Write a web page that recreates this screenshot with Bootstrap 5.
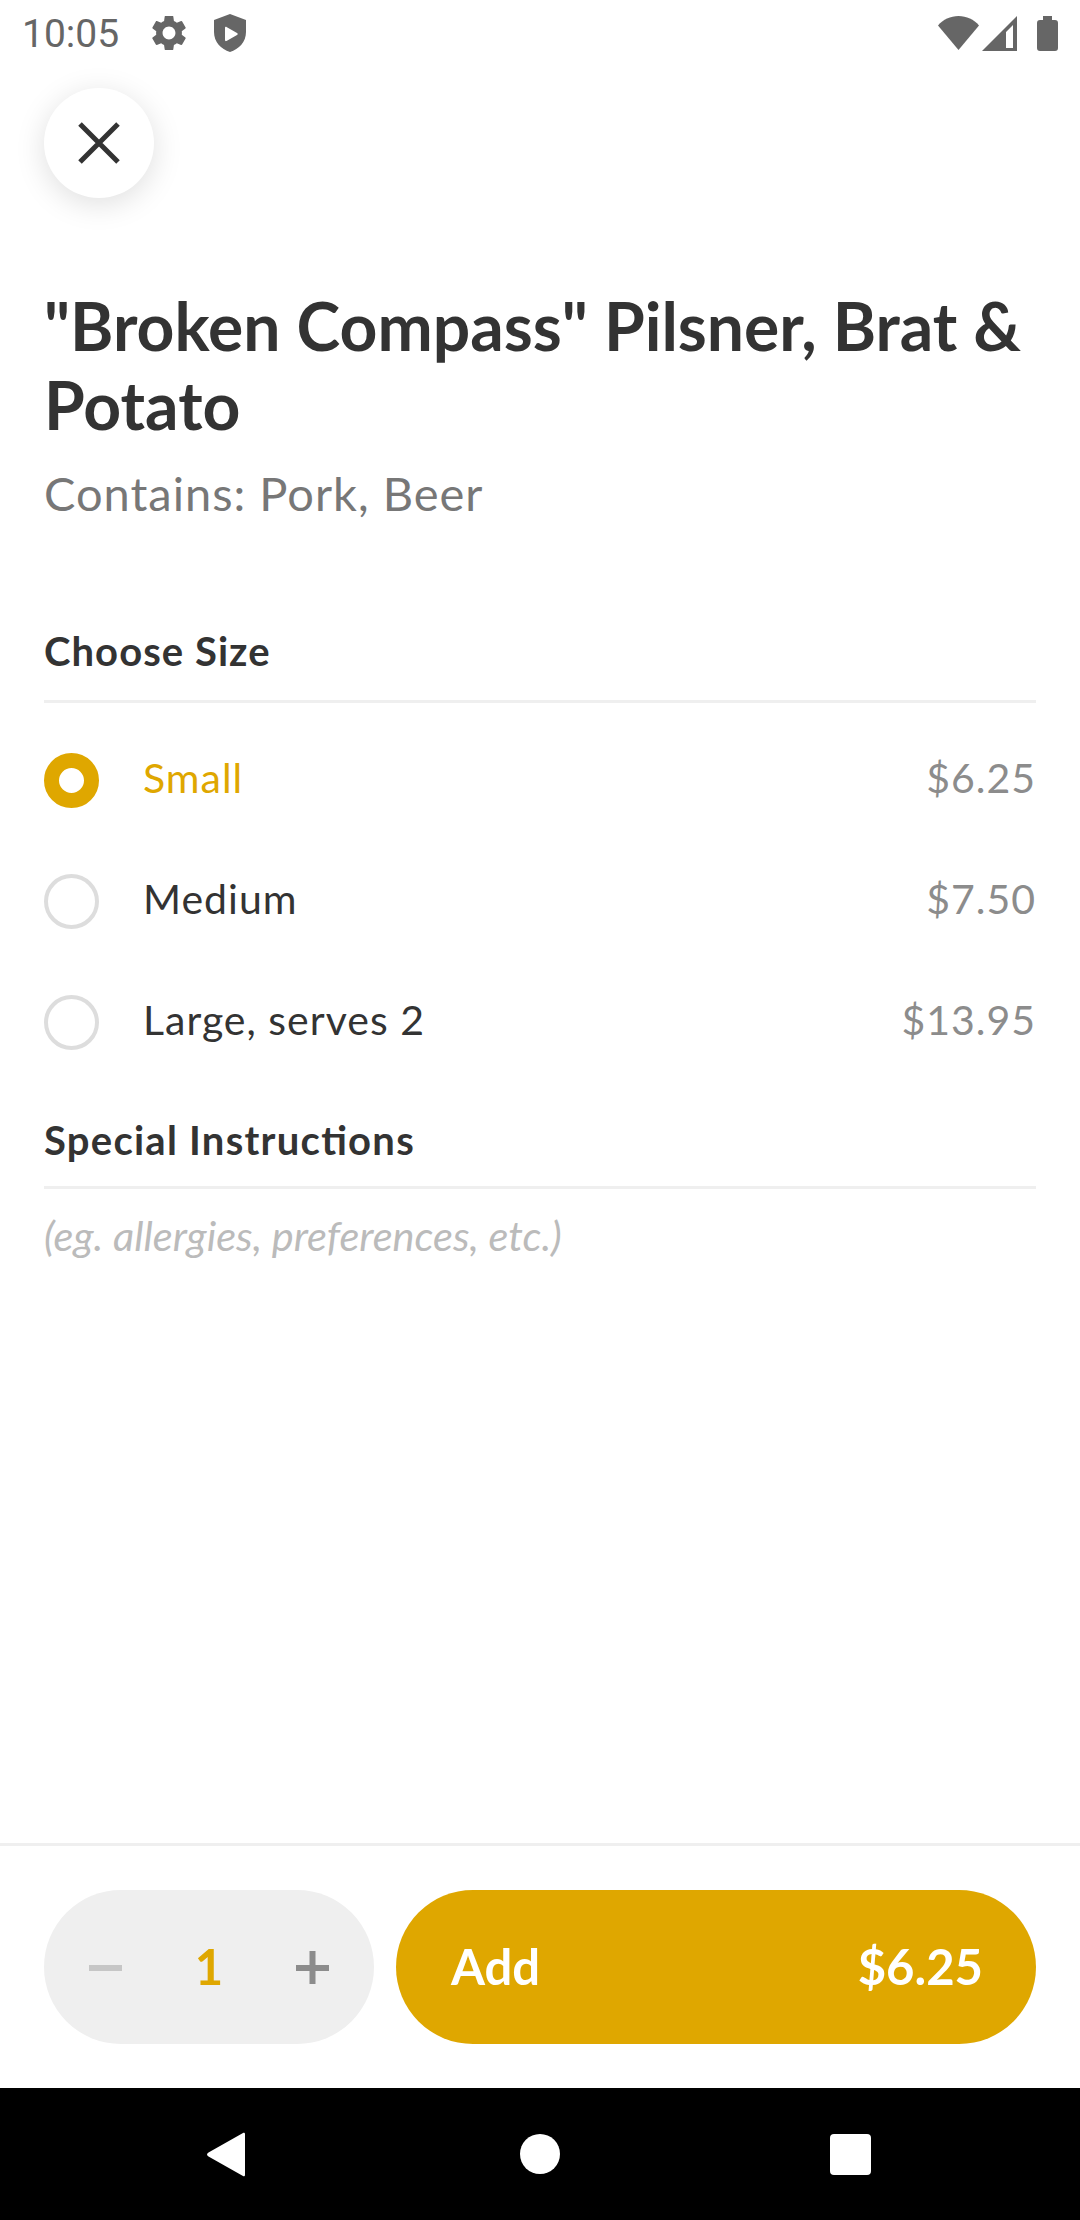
<!doctype html>
<html lang="en">
<head>
<meta charset="utf-8">
<title>Item</title>
<link href="https://cdn.jsdelivr.net/npm/bootstrap@5.3.0/dist/css/bootstrap.min.css" rel="stylesheet">
<style>
html,body{margin:0;background:#fff}
body{font-family:"Lato",sans-serif;color:#333}
.screen{width:1080px;height:2220px;overflow:hidden}
.statusbar{height:66px;padding:0 22px;color:#666}
.clock{font:400 39px/1 "Roboto",sans-serif;margin-right:33px;padding-top:2px}
.gear-ico{margin-right:28px}
.icon-fill{fill:#666;display:block}
.sig-ico{margin-left:3px}
.bat-ico{margin-left:20px}
.close-btn{width:110px;height:110px;margin:22px 0 0 44px;background:#fff;border:0;box-shadow:0 6px 30px rgba(0,0,0,.13)}
.content{padding:0 44px}
.item-title{font-size:66px;line-height:79px;font-weight:700;color:#333;margin:88px 0 0}
.item-sub{font-size:47px;line-height:56px;color:#777;letter-spacing:1px;margin:21px 0 0}
.sec-head{font-size:40px;line-height:48px;font-weight:700;color:#333;letter-spacing:1.050px;font-feature-settings:"liga" 1;border-bottom:3px solid #efefef}
.sec-size{margin-top:106px;padding-bottom:25px;margin-bottom:17px}
.opt-row{height:121px;font-size:41px;letter-spacing:1px;color:#333}
.opt-row span{margin-bottom:6px}
.opt-row .form-check-input{width:55px;height:55px;margin:0 44px 0 0;flex:none;border:4px solid #ddd;background-color:#fff;background-image:none;float:none}
.opt-row .form-check-input:checked{border:15px solid #dfa700;background:#fff;background-image:none}
.opt-row .form-check-input:focus{box-shadow:none}
.opt-on{color:#dfa700}
.opt-price{color:#8c8c8c;margin-left:auto}
.sec-special{margin-top:33px;padding-bottom:22px;letter-spacing:1.250px}
.note-hint{font-size:41.500px;line-height:48px;font-style:italic;color:#bbb;margin-top:22px}
.footer-bar{border-top:3px solid #efefef;padding:44px}
.stepper{width:330px;height:154px;background:#efefef;padding:0 45px;color:#dfa700;font-size:49px;font-weight:700}
.add-btn{height:154px;background:#dfa700;color:#fff;border:0;padding:0 53px 0 55px;font-size:49px;font-weight:700;margin-left:22px}
.add-btn:hover,.add-btn:active{background:#dfa700;color:#fff}
.navbar-sys{height:132px;background:#000;padding:0 0 0 207px}
.nav-gap-1{margin-left:275px}
.nav-gap-2{margin-left:270px}
</style>
</head>
<body>
<div class="screen d-flex flex-column">
  <div class="statusbar d-flex align-items-center flex-shrink-0">
    <span class="clock">10:05</span>
    <svg class="icon-fill gear-ico" width="34" height="34" viewBox="2.5 2.5 19 19"><path d="M19.14 12.94c.04-.3.06-.61.06-.94 0-.32-.02-.64-.07-.94l2.03-1.58a.49.49 0 0 0 .12-.61l-1.92-3.32a.488.488 0 0 0-.59-.22l-2.39.96c-.5-.38-1.03-.7-1.62-.94l-.36-2.54a.484.484 0 0 0-.48-.41h-3.84c-.24 0-.43.17-.47.41l-.36 2.54c-.59.24-1.13.57-1.62.94l-2.39-.96c-.22-.08-.47 0-.59.22L2.74 8.87c-.12.21-.08.47.12.61l2.03 1.58c-.05.3-.09.63-.09.94s.02.64.07.94l-2.03 1.58a.49.49 0 0 0-.12.61l1.92 3.32c.12.22.37.29.59.22l2.39-.96c.5.38 1.03.7 1.62.94l.36 2.54c.05.24.24.41.48.41h3.84c.24 0 .44-.17.47-.41l.36-2.54c.59-.24 1.13-.56 1.62-.94l2.39.96c.22.08.47 0 .59-.22l1.92-3.32c.12-.22.07-.47-.12-.61l-2.01-1.58zM12 15.6c-1.98 0-3.6-1.62-3.6-3.6s1.62-3.6 3.6-3.6 3.6 1.62 3.6 3.6-1.62 3.6-3.6 3.6z"/></svg>
    <svg class="icon-fill" width="32" height="38" viewBox="0 0 32 38"><path fill-rule="evenodd" d="M16 0 32 6V18C32 28 25 35 16 38 7 35 0 28 0 18V6ZM11 14V26C11 27 11.800 27.400 12.500 27L23 21C24 20.400 24 19.600 23 19L12.500 13C11.800 12.600 11 13 11 14Z"/></svg>
    <div class="ms-auto d-flex align-items-center">
      <svg class="icon-fill" width="41" height="34" viewBox="0 0 41 34"><path d="M0 9.500C5 3.500 12.500 0 20.500 0S36 3.500 41 9.500L20.500 34Z"/></svg>
      <svg class="icon-fill sig-ico" width="35" height="35" viewBox="0 0 35 35"><path fill-rule="evenodd" d="M0 35 35 0V35ZM24 16V32H31V9Z"/></svg>
      <svg class="icon-fill bat-ico" width="21" height="35" viewBox="0 0 21 35"><path d="M6 0H15V4H18C20 4 21 5 21 7V32C21 34 20 35 18 35H3C1 35 0 34 0 32V7C0 5 1 4 3 4H6Z"/></svg>
    </div>
  </div>

  <button type="button" class="close-btn rounded-circle d-flex align-items-center justify-content-center p-0 flex-shrink-0" aria-label="Close">
    <svg width="42" height="42" viewBox="0 0 42 42"><path d="M2 2 40 40M40 2 2 40" stroke="#333" stroke-width="5" fill="none"/></svg>
  </button>

  <div class="content flex-grow-1">
    <h1 class="item-title">"Broken Compass" Pilsner, Brat &amp; Potato</h1>
    <p class="item-sub">Contains: Pork, Beer</p>

    <div class="sec-head sec-size">Choose Size</div>
    <label class="opt-row opt-on d-flex align-items-center">
      <input class="form-check-input" type="radio" name="size" checked>
      <span>Small</span><span class="opt-price">$6.25</span>
    </label>
    <label class="opt-row d-flex align-items-center">
      <input class="form-check-input" type="radio" name="size">
      <span>Medium</span><span class="opt-price">$7.50</span>
    </label>
    <label class="opt-row d-flex align-items-center">
      <input class="form-check-input" type="radio" name="size">
      <span>Large, serves 2</span><span class="opt-price">$13.95</span>
    </label>

    <div class="sec-head sec-special">Special Instructions</div>
    <div class="note-hint">(eg. allergies, preferences, etc.)</div>
  </div>

  <div class="footer-bar d-flex flex-shrink-0">
    <div class="stepper rounded-pill d-flex align-items-center justify-content-between flex-shrink-0">
      <svg width="33" height="33" viewBox="0 0 33 33"><rect y="14" width="33" height="6" fill="#c6c6c6"/></svg>
      <span>1</span>
      <svg width="33" height="33" viewBox="0 0 33 33"><path d="M0 14H13.500V0H19.500V14H33V20H19.500V33H13.500V20H0Z" fill="#8c8c8c"/></svg>
    </div>
    <button type="button" class="btn add-btn rounded-pill flex-grow-1 d-flex align-items-center justify-content-between">
      <span>Add</span><span>$6.25</span>
    </button>
  </div>

  <div class="navbar-sys d-flex align-items-center flex-shrink-0">
    <svg width="38" height="45" viewBox="0 0 38 45"><path d="M36 1 1.500 20.500C-.5 21.700-.5 23.300 1.500 24.500L36 44C37 44.700 38 44 38 43V2C38 1 37 .300 36 1Z" fill="#fff"/></svg>
    <svg class="nav-gap-1" width="40" height="40" viewBox="0 0 40 40"><circle cx="20" cy="20" r="20" fill="#fff"/></svg>
    <svg class="nav-gap-2" width="41" height="41" viewBox="0 0 41 41"><rect width="41" height="41" rx="4" fill="#fff"/></svg>
  </div>
</div>
<script src="https://cdn.jsdelivr.net/npm/bootstrap@5.3.0/dist/js/bootstrap.bundle.min.js"></script>
</body>
</html>
